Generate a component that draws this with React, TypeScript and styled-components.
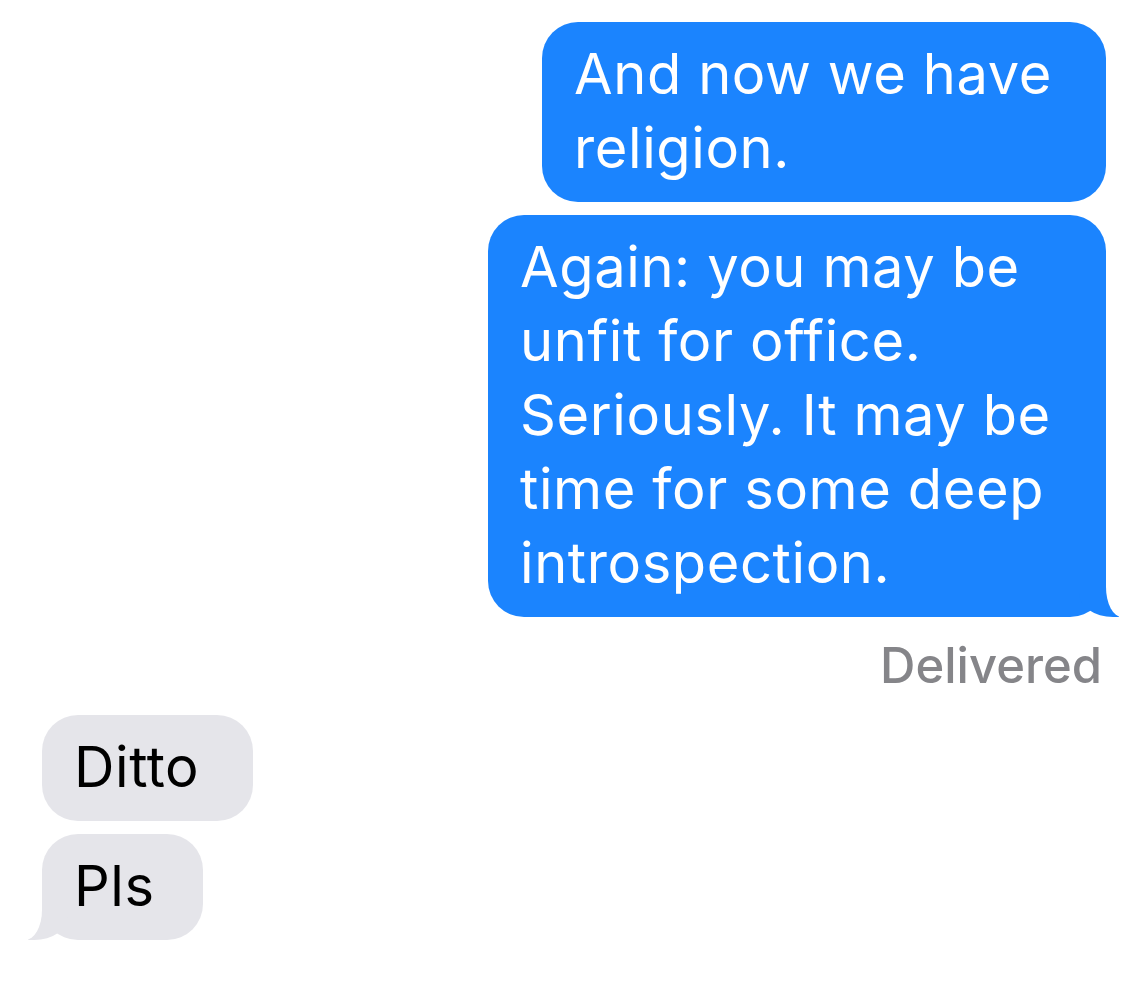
import { Fragment } from "react";
import styled, { createGlobalStyle } from "styled-components";

const GlobalStyle = createGlobalStyle`
  html, body {
    margin: 0;
    padding: 0;
    background: #ffffff;
  }
  body {
    font-family: Inter, "Noto Sans", "Liberation Sans", sans-serif;
    -webkit-font-smoothing: antialiased;
  }
`;

const BLUE = "#1b84fe";
const GRAY = "#e5e5ea";

type Message = {
  fromMe: boolean;
  lines: string[];
  width: number;
  tail?: boolean;
  gap: number;
};

const sent: Message[] = [
  { fromMe: true, lines: ["And now we have", "religion."], width: 564, gap: 0 },
  {
    fromMe: true,
    lines: [
      "Again: you may be",
      "unfit for office.",
      "Seriously. It may be",
      "time for some deep",
      "introspection.",
    ],
    width: 618,
    tail: true,
    gap: 13,
  },
];

const received: Message[] = [
  { fromMe: false, lines: ["Ditto"], width: 211, gap: 0 },
  { fromMe: false, lines: ["Pls"], width: 161, tail: true, gap: 13 },
];

const Thread = styled.div`
  display: flex;
  flex-direction: column;
  padding: 22px 34px 40px 42px;
`;

// tail = a filled blob (::before) with a page-coloured mask (::after) carving the curve
const sentTail = `
  &::before {
    content: "";
    position: absolute;
    bottom: 0;
    right: -13px;
    width: 40px;
    height: 36px;
    background: ${BLUE};
    border-bottom-left-radius: 34px 24px;
  }
  &::after {
    content: "";
    position: absolute;
    bottom: 0;
    right: -60px;
    width: 60px;
    height: 36px;
    background: #ffffff;
    border-bottom-left-radius: 16px 30px;
  }
`;

const receivedTail = `
  &::before {
    content: "";
    position: absolute;
    bottom: 0;
    left: -14px;
    width: 40px;
    height: 36px;
    background: ${GRAY};
    border-bottom-right-radius: 34px 24px;
  }
  &::after {
    content: "";
    position: absolute;
    bottom: 0;
    left: -60px;
    width: 60px;
    height: 36px;
    background: #ffffff;
    border-bottom-right-radius: 17px 30px;
  }
`;

const Bubble = styled.div<{ $me: boolean; $w: number; $tail?: boolean; $gap: number }>`
  position: relative;
  box-sizing: border-box;
  width: ${(p) => p.$w}px;
  margin-top: ${(p) => p.$gap}px;
  align-self: ${(p) => (p.$me ? "flex-end" : "flex-start")};
  padding: 15px 20px 17px 32px;
  border-radius: 36px;
  background: ${(p) => (p.$me ? BLUE : GRAY)};
  color: ${(p) => (p.$me ? "#ffffff" : "#000000")};
  font-size: 56px;
  line-height: 74px;
  letter-spacing: 0.6px;
  white-space: nowrap;

  ${(p) => (p.$tail ? (p.$me ? sentTail : receivedTail) : "")}
`;

const Status = styled.div`
  align-self: flex-end;
  margin: 19px 4px 19px 0;
  font-size: 49px;
  line-height: 60px;
  font-weight: 500;
  color: #858589;
`;

const MessageBubble = ({ m }: { m: Message }) => (
  <Bubble $me={m.fromMe} $w={m.width} $tail={m.tail} $gap={m.gap}>
    {m.lines.map((line, i) => (
      <Fragment key={i}>
        {i > 0 && <br />}
        {line}
      </Fragment>
    ))}
  </Bubble>
);

export default function App() {
  return (
    <>
      <GlobalStyle />
      <Thread>
        {sent.map((m, i) => (
          <MessageBubble key={i} m={m} />
        ))}
        <Status>Delivered</Status>
        {received.map((m, i) => (
          <MessageBubble key={i} m={m} />
        ))}
      </Thread>
    </>
  );
}
